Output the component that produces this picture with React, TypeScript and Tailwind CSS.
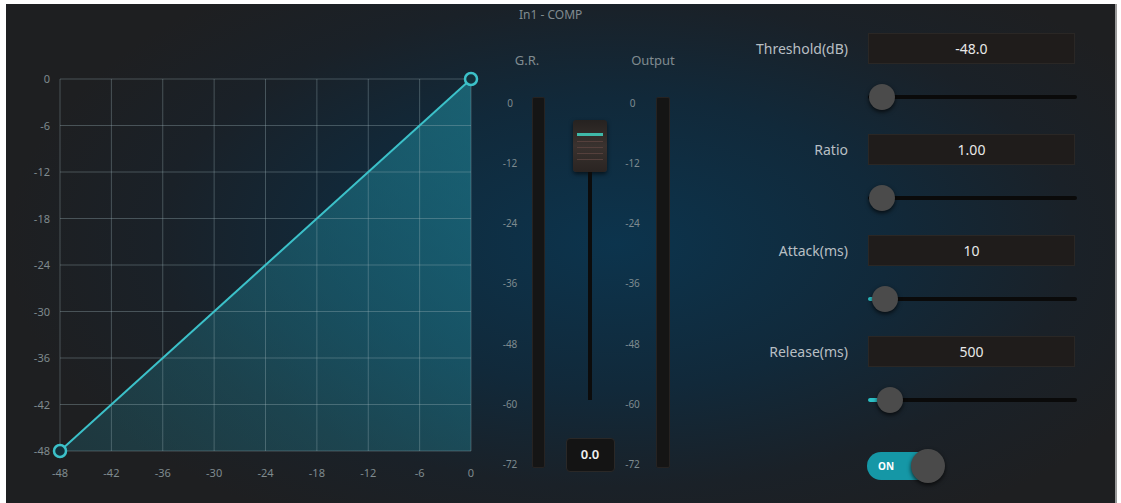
import React from "react";

const ticks = [0, -6, -12, -18, -24, -30, -36, -42, -48];
const xTicks = [-48, -42, -36, -30, -24, -18, -12, -6, 0];
const meterTicks = [0, -12, -24, -36, -48, -60, -72];

function Chart() {
  const cols = xTicks.map((_, i) => 60 + (i * 411) / 8);
  const rows = ticks.map((_, i) => 79 + (i * 372) / 8);
  return (
    <svg width={484} height={499} viewBox="6 4 484 499" className="shrink-0">
      <defs>
        <linearGradient id="curveFill" x1="1" y1="0" x2="0" y2="1">
          <stop offset="0" stopColor="#1f8799" stopOpacity="0.6" />
          <stop offset="1" stopColor="#1f6f80" stopOpacity="0.3" />
        </linearGradient>
      </defs>
      <polygon points="60,451 471,79 471,451" fill="url(#curveFill)" />
      {rows.map((y) => (
        <line key={"r" + y} x1={60} x2={471} y1={y} y2={y} stroke="#9fb4ba" strokeOpacity={0.35} strokeWidth={1} />
      ))}
      {cols.map((x) => (
        <line key={"c" + x} x1={x} x2={x} y1={79} y2={451} stroke="#9fb4ba" strokeOpacity={0.35} strokeWidth={1} />
      ))}
      {ticks.map((t, i) => (
        <text key={"yt" + t} x={50} y={rows[i] + 4} textAnchor="end" fontSize={11} fill="#7f8a8e" fontFamily="'Noto Sans', sans-serif">
          {t}
        </text>
      ))}
      {xTicks.map((t, i) => (
        <text key={"xt" + t} x={cols[i]} y={477} textAnchor="middle" fontSize={11} fill="#7f8a8e" fontFamily="'Noto Sans', sans-serif">
          {t}
        </text>
      ))}
      <line x1={60} y1={451} x2={471} y2={79} stroke="#3cc1c9" strokeWidth={2} />
      <circle cx={60} cy={451} r={6} fill="#12303a" stroke="#3cc1c9" strokeWidth={2.5} />
      <circle cx={471} cy={79} r={6} fill="#12303a" stroke="#3cc1c9" strokeWidth={2.5} />
    </svg>
  );
}

function Scale({ width }: { width: string }) {
  return (
    <div className={`${width} flex h-[373px] shrink-0 flex-col justify-between text-center text-[10px] leading-[12px] text-[#7d8a8f]`}>
      {meterTicks.map((t) => (
        <span key={t}>{t}</span>
      ))}
    </div>
  );
}

function Meters() {
  return (
    <div className="flex w-[230px] shrink-0 flex-col">
      <div className="h-[22px] pl-[29px] text-[12px] leading-[22px] text-[#808b90]">In1 - COMP</div>
      <div className="mt-[26px] flex pl-[5px] text-[13px] leading-[16px] text-[#808b90]">
        <span className="w-[64px] text-center">G.R.</span>
        <span className="ml-[63px] w-[62px] text-center">Output</span>
      </div>
      <div className="mt-[29px] flex">
        <div className="ml-[5px]">
          <Scale width="w-[30px]" />
        </div>
        <div className="ml-[7px] h-[371px] w-[13px] rounded-[2px] border border-[#262322] bg-[#151515]" />
        <div className="ml-[15px] flex w-[60px] flex-col items-center">
          <div className="mt-[23px] flex h-[52px] w-[34px] flex-col items-stretch gap-[5px] rounded-[3px] bg-gradient-to-b from-[#262220] via-[#3a322f] to-[#2a2422] px-[4px] pt-[13px] shadow-[0_2px_4px_rgba(0,0,0,0.6)]">
            <div className="h-[3px] bg-[#3fb8a8]" />
            <div className="h-[1px] bg-[#55403c]" />
            <div className="h-[1px] bg-[#55403c]" />
            <div className="h-[1px] bg-[#55403c]" />
            <div className="h-[1px] bg-[#55403c]" />
          </div>
          <div className="h-[228px] w-[4px] bg-[#0c0c0c]" />
          <div className="mt-[38px] flex h-[34px] w-[49px] items-center justify-center rounded-[4px] border border-[#2a2827] bg-[#141414] text-[13px] font-semibold text-[#f0f0f0]">
            0.0
          </div>
        </div>
        <Scale width="w-[25px]" />
        <div className="ml-[11px] h-[371px] w-[14px] rounded-[2px] border border-[#262322] bg-[#151515]" />
      </div>
    </div>
  );
}

function Slider({ center, fill }: { center: number; fill: boolean }) {
  const left = center - 868 - 13;
  return (
    <div className="relative ml-[148px] mt-[20px] h-[26px] w-[209px]">
      <div className="absolute left-0 right-0 top-[11px] h-[4px] rounded-full bg-[#0a0a0a]" />
      {fill && <div className="absolute left-0 top-[11px] h-[4px] rounded-full bg-[#2cc0c6]" style={{ width: center - 868 }} />}
      <div
        className="absolute top-0 h-[26px] w-[26px] rounded-full bg-[#4b4b4b] shadow-[0_2px_4px_rgba(0,0,0,0.7)]"
        style={{ left }}
      />
    </div>
  );
}

function Param({ label, value, first, center, fill }: { label: string; value: string; first?: boolean; center: number; fill: boolean }) {
  return (
    <div>
      <div className={`${first ? "mt-[29px]" : "mt-[24px]"} flex h-[31px] items-center`}>
        <span className="w-[128px] text-right text-[14px] text-[#b8bfc3]">{label}</span>
        <div className="ml-[20px] flex h-[31px] w-[207px] items-center justify-center border border-[#2a2725] bg-[#1f1c1b] text-[14px] text-[#e8e8e8]">
          {value}
        </div>
      </div>
      <Slider center={center} fill={fill} />
    </div>
  );
}

function Controls() {
  return (
    <div className="flex w-[397px] shrink-0 flex-col">
      <Param label="Threshold(dB)" value="-48.0" first center={882} fill={false} />
      <Param label="Ratio" value="1.00" center={882} fill={false} />
      <Param label="Attack(ms)" value="10" center={885} fill />
      <Param label="Release(ms)" value="500" center={890} fill />
      <div className="relative ml-[147px] mt-[36px] h-[34px] w-[78px]">
        <div className="absolute left-0 top-[3px] flex h-[28px] w-[66px] items-center rounded-full bg-[#1597a6] pl-[11px] text-[10px] font-bold text-white">
          ON
        </div>
        <div className="absolute right-0 top-0 h-[34px] w-[34px] rounded-full bg-[#4a4a4a] shadow-[0_2px_4px_rgba(0,0,0,0.7)]" />
      </div>
    </div>
  );
}

export default function App() {
  return (
    <div className="h-[503px] w-[1121px] overflow-hidden bg-white pl-[6px] pt-[4px] font-['Noto_Sans',sans-serif]">
      <div className="flex h-[499px] w-[1111px] border-r-2 border-[#9a9a9a] bg-[radial-gradient(ellipse_55%_65%_at_55%_48%,#0c344d_0%,#11293a_45%,#1a2128_75%,#1e1f21_100%)]">
        <Chart />
        <Meters />
        <Controls />
      </div>
    </div>
  );
}
